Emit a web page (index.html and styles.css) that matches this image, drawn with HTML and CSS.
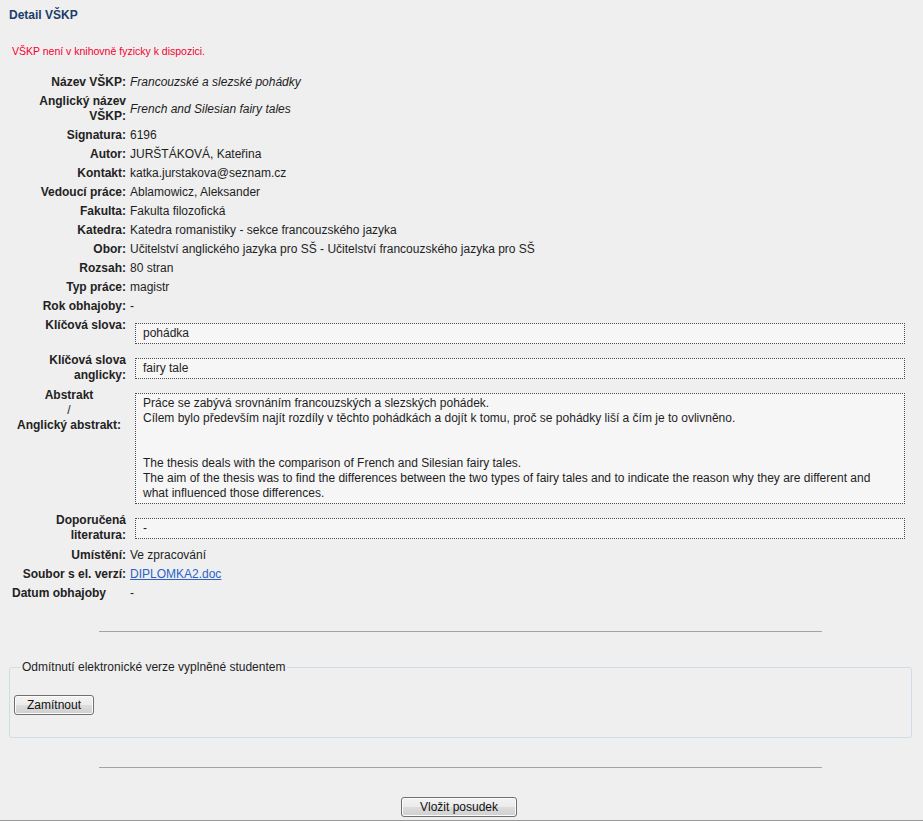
FILE: index.html
```html
<!DOCTYPE html>
<html lang="cs">
<head>
<meta charset="utf-8">
<title>Detail VŠKP</title>
<link rel="stylesheet" href="styles.css">
</head>
<body>
<div class="page">
  <h1 class="title">Detail VŠKP</h1>
  <p class="notice">VŠKP není v knihovně fyzicky k dispozici.</p>

  <div class="detail">
    <div class="row"><div class="label">Název VŠKP:</div><div class="value"><i>Francouzské a slezské pohádky</i></div></div>
    <div class="row"><div class="label">Anglický název VŠKP:</div><div class="value"><i>French and Silesian fairy tales</i></div></div>
    <div class="row"><div class="label">Signatura:</div><div class="value">6196</div></div>
    <div class="row"><div class="label">Autor:</div><div class="value">JURŠTÁKOVÁ, Kateřina</div></div>
    <div class="row"><div class="label">Kontakt:</div><div class="value">katka.jurstakova@seznam.cz</div></div>
    <div class="row"><div class="label">Vedoucí práce:</div><div class="value">Ablamowicz, Aleksander</div></div>
    <div class="row"><div class="label">Fakulta:</div><div class="value">Fakulta filozofická</div></div>
    <div class="row"><div class="label">Katedra:</div><div class="value">Katedra romanistiky - sekce francouzského jazyka</div></div>
    <div class="row"><div class="label">Obor:</div><div class="value">Učitelství anglického jazyka pro SŠ - Učitelství francouzského jazyka pro SŠ</div></div>
    <div class="row"><div class="label">Rozsah:</div><div class="value">80 stran</div></div>
    <div class="row"><div class="label">Typ práce:</div><div class="value">magistr</div></div>
    <div class="row"><div class="label">Rok obhajoby:</div><div class="value">-</div></div>
    <div class="row top"><div class="label">Klíčová slova:</div><div class="value"><div class="box">pohádka</div></div></div>
    <div class="row top"><div class="label">Klíčová slova anglicky:</div><div class="value"><div class="box">fairy tale</div></div></div>
    <div class="row top"><div class="label center">Abstrakt<br><span class="slash">/</span><br>Anglický abstrakt:</div><div class="value"><div class="box">Práce se zabývá srovnáním francouzských a slezských pohádek.<br>Cílem bylo především najít rozdíly v těchto pohádkách a dojít k tomu, proč se pohádky liší a čím je to ovlivněno.<br><br><br>The thesis deals with the comparison of French and Silesian fairy tales.<br>The aim of the thesis was to find the differences between the two types of fairy tales and to indicate the reason why they are different and what influenced those differences.</div></div></div>
    <div class="row top"><div class="label">Doporučená literatura:</div><div class="value"><div class="box">-</div></div></div>
    <div class="row"><div class="label">Umístění:</div><div class="value">Ve zpracování</div></div>
    <div class="row"><div class="label">Soubor s el. verzí:</div><div class="value"><a class="link" href="#">DIPLOMKA2.doc</a></div></div>
    <div class="row"><div class="label left">Datum obhajoby</div><div class="value">-</div></div>
  </div>

  <div class="rule"></div>

  <fieldset class="group">
    <legend class="group-title">Odmítnutí elektronické verze vyplněné studentem</legend>
    <button class="btn btn-reject" type="button">Zamítnout</button>
  </fieldset>

  <div class="rule rule-second"></div>

  <div class="actions">
    <button class="btn btn-review" type="button">Vložit posudek</button>
  </div>
  <div class="bottom-line"></div>
</div>
</body>
</html>
```

FILE: styles.css
```css
html, body {
  margin: 0;
  padding: 0;
  background: #efefef;
}

.page {
  font-family: "Liberation Sans", Arial, sans-serif;
  font-size: 12px;
  color: #1e1e1e;
  width: 923px;
  overflow: hidden;
}

.title {
  margin: 0;
  padding: 8px 0 0 9px;
  font-size: 12px;
  line-height: 15px;
  font-weight: bold;
  color: #1c3d6b;
}

.notice {
  margin: 22px 0 0 12px;
  font-size: 10.5px;
  line-height: 13px;
  color: #f5002f;
}

.detail {
  margin: 15px 0 0 12px;
}

.row {
  display: grid;
  grid-template-columns: 114px 780px;
  column-gap: 4px;
  align-items: center;
}

.row.top {
  align-items: start;
}

.label,
.value {
  padding: 2px 0;
  line-height: 15px;
}

.label {
  text-align: right;
  font-weight: bold;
  color: #222;
}

.label.center {
  text-align: center;
}

.label.left {
  text-align: left;
}

.slash {
  font-weight: normal;
}

.box {
  margin: 5px 5px;
  padding: 2px 7px;
  border: 1px dotted #4a4a4a;
  background: #f6f6f6;
  line-height: 15px;
}

.link {
  color: #2c62c8;
  text-decoration: underline;
}

.rule {
  width: 723px;
  height: 0;
  margin: 28px 0 0 99px;
  border-top: 1px solid #a3a3a3;
}

.rule-second {
  margin-top: 29px;
}

.group {
  margin: 28px 11px 0 9px;
  padding: 20px 4px 22px 4px;
  border: 1px solid #cfdce6;
  border-radius: 3px;
  min-width: 0;
}

.group-title {
  margin-left: 6px;
  padding: 0 2px;
  font-size: 12px;
  line-height: 15px;
  color: #1e1e1e;
}

.btn {
  display: block;
  height: 20px;
  padding: 0;
  font-family: "Liberation Sans", Arial, sans-serif;
  font-size: 12px;
  color: #111;
  border: 1px solid #707070;
  border-radius: 3px;
  background: linear-gradient(#f3f3f3 0%, #ebebeb 50%, #dddddd 50%, #cfcfcf 100%);
  box-shadow: inset 0 0 0 1px #fcfcfc;
}

.btn-reject {
  width: 80px;
}

.actions {
  display: flex;
  justify-content: center;
  margin-top: 29px;
  padding-right: 5px;
}

.btn-review {
  width: 116px;
}

.bottom-line {
  margin-top: 3px;
  border-top: 1px solid #9a9a9a;
}
```
